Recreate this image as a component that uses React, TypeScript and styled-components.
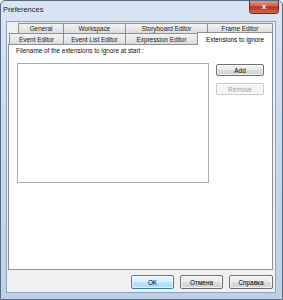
import styled, { createGlobalStyle } from "styled-components";

const GlobalStyle = createGlobalStyle`
  html, body {
    margin: 0;
    padding: 0;
    background: #ffffff;
  }
  body {
    font-family: "Liberation Sans", Arial, sans-serif;
  }
`;

const Window = styled.div`
  width: 283px;
  height: 300px;
  box-sizing: border-box;
  border: 1px solid #5a6c82;
  border-radius: 5px 5px 0 0;
  background: linear-gradient(180deg, #d9e5f3 0%, #c9dbef 40%, #bcd0e8 100%);
  display: flex;
  flex-direction: column;
  font-size: 6.4px;
  color: #000;
  overflow: hidden;
`;

const TitleBar = styled.div`
  height: 20px;
  display: flex;
  align-items: flex-start;
  justify-content: space-between;
  padding-left: 2px;
`;

const Title = styled.span`
  font-size: 7.5px;
  margin-top: 4px;
  color: #1e1e1e;
`;

const CloseButton = styled.div`
  width: 30px;
  height: 14px;
  margin-right: 3px;
  margin-top: -1px;
  box-sizing: border-box;
  border: 1px solid #6b2a24;
  border-top: none;
  border-radius: 0 0 4px 4px;
  background: linear-gradient(180deg, #e7a493 0%, #d0614a 45%, #b9331f 55%, #d36a52 100%);
  color: #fff;
  font-size: 8px;
  font-weight: bold;
  display: flex;
  align-items: center;
  justify-content: center;
`;

const Client = styled.div`
  flex: 1;
  margin: 0 6px 6px 5px;
  border: 1px solid #8ea3bd;
  background: #f0f0f0;
  display: flex;
  flex-direction: column;
  padding: 1px 2px 3px 1px;
`;

const Tabs = styled.div`
  display: flex;
  flex-direction: column;
`;

const TabRow = styled.div<{ $indent: number; $tall?: boolean }>`
  display: flex;
  height: ${(p) => (p.$tall ? 11 : 10)}px;
  padding-left: ${(p) => p.$indent}px;
  align-items: flex-end;
`;

const Tab = styled.div<{ $w: number; $active?: boolean }>`
  flex: 0 0 ${(p) => p.$w}px;
  height: ${(p) => (p.$active ? "13px" : "100%")};
  margin-bottom: ${(p) => (p.$active ? -1 : 0)}px;
  box-sizing: border-box;
  border: 1px solid #8c9099;
  border-bottom: none;
  margin-right: -1px;
  background: ${(p) =>
    p.$active ? "#ffffff" : "linear-gradient(180deg, #f4f4f4 0%, #e8e8e8 50%, #dcdcdc 100%)"};
  color: ${(p) => (p.$active ? "#000" : "#222")};
  display: flex;
  align-items: center;
  justify-content: center;
  white-space: nowrap;
  overflow: hidden;
  position: relative;
  z-index: ${(p) => (p.$active ? 2 : 1)};
`;

const Panel = styled.div`
  flex: 1;
  background: #ffffff;
  border: 1px solid #8c9099;
  display: flex;
  flex-direction: column;
  padding: 1px 8px 0 7px;
`;

const Label = styled.div`
  height: 10px;
  line-height: 10px;
  color: #111;
`;

const ListRow = styled.div`
  display: flex;
  gap: 7px;
  margin-top: 7px;
  padding-left: 1px;
`;

const ListBox = styled.div`
  width: 192px;
  height: 120px;
  box-sizing: border-box;
  border: 1px solid #abadb3;
  background: #fff;
`;

const SideButtons = styled.div`
  display: flex;
  flex-direction: column;
  gap: 7px;
  padding-top: 1px;
`;

const Button = styled.div<{ $w: number; $disabled?: boolean; $default?: boolean }>`
  width: ${(p) => p.$w}px;
  height: ${(p) => (p.$default !== undefined ? 14 : 12)}px;
  box-sizing: border-box;
  border: 1px solid
    ${(p) => (p.$disabled ? "#c8c8c8" : p.$default ? "#3c7fb1" : "#707070")};
  border-radius: 2px;
  background: ${(p) =>
    p.$disabled
      ? "#f4f4f4"
      : p.$default
      ? "linear-gradient(180deg, #eaf6fd 0%, #d9f0fc 50%, #bee6fd 51%, #a7d9f5 100%)"
      : "linear-gradient(180deg, #f2f2f2 0%, #ebebeb 50%, #dddddd 51%, #cfcfcf 100%)"};
  color: ${(p) => (p.$disabled ? "#a0a0a0" : "#000")};
  box-shadow: inset 0 0 0 1px rgba(255, 255, 255, 0.7);
  display: flex;
  align-items: center;
  justify-content: center;
`;

const Footer = styled.div`
  display: flex;
  justify-content: flex-end;
  gap: 6px;
  margin-top: 5px;
`;

export default function App() {
  const topRow = [
    { name: "General", w: 46 },
    { name: "Workspace", w: 63 },
    { name: "Storyboard Editor", w: 83 },
    { name: "Frame Editor", w: 66 },
  ];
  const bottomRow = [
    { name: "Event Editor", w: 55 },
    { name: "Event List Editor", w: 63 },
    { name: "Expression Editor", w: 73 },
    { name: "Extensions to ignore", w: 76, active: true },
  ];

  return (
    <>
      <GlobalStyle />
      <Window>
        <TitleBar>
          <Title>Preferences</Title>
          <CloseButton>x</CloseButton>
        </TitleBar>
        <Client>
          <Tabs>
            <TabRow $indent={10}>
              {topRow.map((t) => (
                <Tab key={t.name} $w={t.w}>
                  {t.name}
                </Tab>
              ))}
            </TabRow>
            <TabRow $indent={1} $tall>
              {bottomRow.map((t) => (
                <Tab key={t.name} $w={t.w} $active={t.active}>
                  {t.name}
                </Tab>
              ))}
            </TabRow>
          </Tabs>
          <Panel>
            <Label>Filename of the extensions to ignore at start :</Label>
            <ListRow>
              <ListBox />
              <SideButtons>
                <Button $w={48}>Add</Button>
                <Button $w={48} $disabled>
                  Remove
                </Button>
              </SideButtons>
            </ListRow>
          </Panel>
          <Footer>
            <Button $w={43} $default>
              OK
            </Button>
            <Button $w={43} $default={false}>
              Отмена
            </Button>
            <Button $w={44} $default={false}>
              Справка
            </Button>
          </Footer>
        </Client>
      </Window>
    </>
  );
}
